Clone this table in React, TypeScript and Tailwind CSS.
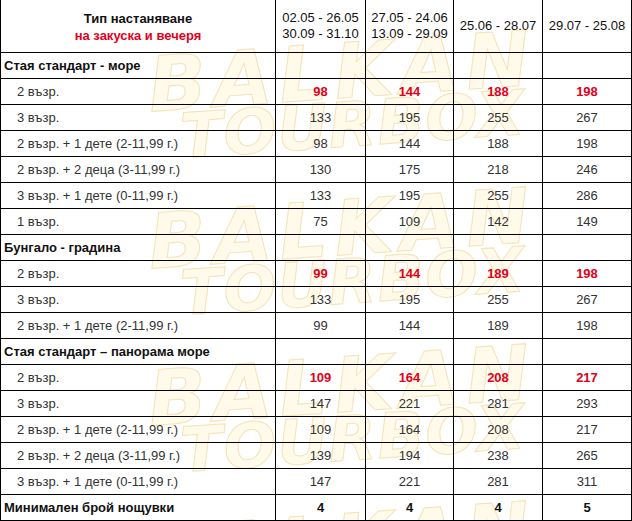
import React from "react";

type Row =
  | { kind: "cat"; label: string }
  | { kind: "row"; label: string; vals: number[]; hot?: boolean }
  | { kind: "min"; label: string; vals: number[] };

const rows: Row[] = [
  { kind: "cat", label: "Стая стандарт - море" },
  { kind: "row", label: "2 възр.", vals: [98, 144, 188, 198], hot: true },
  { kind: "row", label: "3 възр.", vals: [133, 195, 255, 267] },
  { kind: "row", label: "2 възр. + 1 дете (2-11,99 г.)", vals: [98, 144, 188, 198] },
  { kind: "row", label: "2 възр. + 2 деца (3-11,99 г.)", vals: [130, 175, 218, 246] },
  { kind: "row", label: "3 възр. + 1 дете (0-11,99 г.)", vals: [133, 195, 255, 286] },
  { kind: "row", label: "1 възр.", vals: [75, 109, 142, 149] },
  { kind: "cat", label: "Бунгало - градина" },
  { kind: "row", label: "2 възр.", vals: [99, 144, 189, 198], hot: true },
  { kind: "row", label: "3 възр.", vals: [133, 195, 255, 267] },
  { kind: "row", label: "2 възр. + 1 дете (2-11,99 г.)", vals: [99, 144, 189, 198] },
  { kind: "cat", label: "Стая стандарт – панорама море" },
  { kind: "row", label: "2 възр.", vals: [109, 164, 208, 217], hot: true },
  { kind: "row", label: "3 възр.", vals: [147, 221, 281, 293] },
  { kind: "row", label: "2 възр. + 1 дете (2-11,99 г.)", vals: [109, 164, 208, 217] },
  { kind: "row", label: "2 възр. + 2 деца (3-11,99 г.)", vals: [139, 194, 238, 265] },
  { kind: "row", label: "3 възр. + 1 дете (0-11,99 г.)", vals: [147, 221, 281, 311] },
  { kind: "min", label: "Минимален брой нощувки", vals: [4, 4, 4, 5] },
];

const wmBase =
  "absolute whitespace-nowrap font-['DejaVu_Sans',sans-serif] font-black italic leading-none text-[#fffae9] [-webkit-text-stroke:1px_#f5e3b8] [transform:rotate(-4deg)]";

function Watermark() {
  const sets = [0, 157, 314, 471];
  return (
    <div aria-hidden="true" className="absolute inset-0 overflow-hidden pointer-events-none">
      {sets.map((dy) => (
        <React.Fragment key={dy}>
          <span className={`${wmBase} text-[76px] tracking-[7px]`} style={{ left: 148, top: 34 + dy }}>
            BALKAN
          </span>
          <span className={`${wmBase} text-[62px] tracking-[1px]`} style={{ left: 180, top: 94 + dy }}>
            TOURBOX
          </span>
        </React.Fragment>
      ))}
    </div>
  );
}

const cellBase = "border-r border-b border-black flex items-center";

export default function App() {
  return (
    <div className="relative w-[632px] h-[521px] bg-white overflow-hidden font-['Liberation_Sans',Arial,sans-serif] text-[#1e1e1e]">
      <Watermark />
      <div className="relative grid grid-cols-[276px_90px_88px_89px_89px] grid-rows-[53px_repeat(18,26px)]">
        {/* header */}
        <div className={`${cellBase} border-l flex-col justify-center text-center text-[13px] font-bold leading-[17px] pt-[1px] text-[#111]`}>
          <div>Тип настаняване</div>
          <div className="text-[#e2001a]">на закуска и вечеря</div>
        </div>
        {[
          ["02.05 - 26.05", "30.09 - 31.10"],
          ["27.05 - 24.06", "13.09 - 29.09"],
          ["25.06 - 28.07"],
          ["29.07 - 25.08"],
        ].map((lines, i) => (
          <div
            key={i}
            className={`${cellBase} flex-col justify-center text-center text-[13px] leading-[16px] text-[#111]`}
          >
            {lines.map((l) => (
              <div key={l}>{l}</div>
            ))}
          </div>
        ))}

        {rows.map((r, ri) => {
          if (r.kind === "cat") {
            return (
              <React.Fragment key={ri}>
                <div className={`${cellBase} border-l pl-[3px] text-[13px] font-bold text-[#111]`}>{r.label}</div>
                <div className={cellBase} />
                <div className={cellBase} />
                <div className={cellBase} />
                <div className={cellBase} />
              </React.Fragment>
            );
          }
          if (r.kind === "min") {
            return (
              <React.Fragment key={ri}>
                <div className={`${cellBase} border-l pl-[3px] text-[13px] font-bold text-[#111]`}>{r.label}</div>
                {r.vals.map((v, vi) => (
                  <div key={vi} className={`${cellBase} justify-center text-[13px] font-bold text-[#111]`}>
                    {v}
                  </div>
                ))}
              </React.Fragment>
            );
          }
          return (
            <React.Fragment key={ri}>
              <div className={`${cellBase} border-l pl-[16px] text-[13px] text-[#333]`}>{r.label}</div>
              {r.vals.map((v, vi) => (
                <div
                  key={vi}
                  className={`${cellBase} justify-center text-[13px] ${
                    r.hot ? "font-bold text-[#e2001a]" : "text-[#333]"
                  }`}
                >
                  {v}
                </div>
              ))}
            </React.Fragment>
          );
        })}
      </div>
    </div>
  );
}
